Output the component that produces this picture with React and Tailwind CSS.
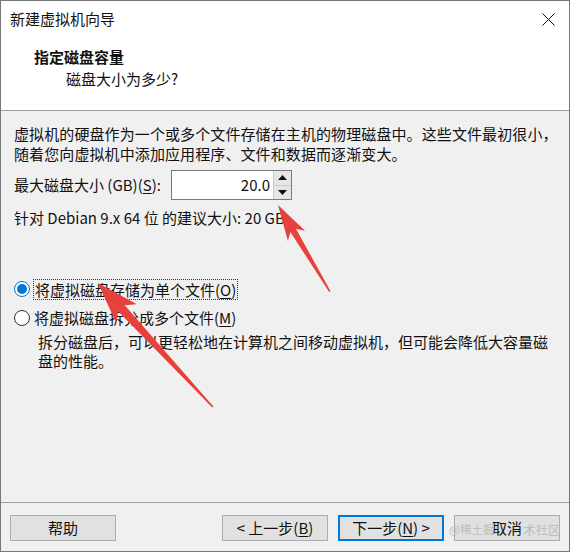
import React from 'react';

const font = { fontFamily: '"Noto Sans CJK SC", "Noto Sans", sans-serif' };

function U({ children }) {
    return <span className="underline underline-offset-2">{children}</span>;
}

function Radio({ checked }) {
    return checked ? (
        <span className="w-[16px] h-[16px] rounded-full border border-[#0078d7] bg-white flex items-center justify-center shrink-0">
            <span className="w-[10px] h-[10px] rounded-full bg-[#0078d7]" />
        </span>
    ) : (
        <span className="w-[16px] h-[16px] rounded-full border border-[#333] bg-white shrink-0" />
    );
}

function Btn({ children, primary, className = '' }) {
    return (
        <button
            className={`w-[106px] h-[26px] bg-[#e1e1e1] text-[15px] text-[#111] flex items-center justify-center ${
                primary ? 'border-2 border-[#0078d7]' : 'border border-[#adadad]'
            } ${className}`}
        >
            {children}
        </button>
    );
}

function Arrow({ x, y, angle, len, head, width }) {
    const hw = width / 2;
    return (
        <g transform={`translate(${x} ${y}) rotate(${angle})`}>
            <polygon
                points={`0,0 ${head},${-hw} ${head * 0.82},${-hw * 0.32} ${len},-0.8 ${len},0.8 ${head * 0.82},${hw * 0.32} ${head},${hw}`}
                fill="#e8413b"
            />
        </g>
    );
}

export default function App() {
    return (
        <div className="relative w-[570px] h-[552px] overflow-hidden border border-[#777] bg-[#f0f0f0] text-[#111] flex flex-col" style={font}>
            {/* header */}
            <div className="bg-white h-[110px] border-b border-[#a0a0a0] flex flex-col shrink-0">
                <div className="h-[36px] flex items-center justify-between pl-[9px] pr-[14px] text-[15px]">
                    <span>新建虚拟机向导</span>
                    <svg width="13" height="13" viewBox="0 0 13 13" className="mt-[1px]">
                        <path d="M0.5 0.5 L12.5 12.5 M12.5 0.5 L0.5 12.5" stroke="#111" strokeWidth="1" />
                    </svg>
                </div>
                <div className="pl-[33px] mt-[9px] text-[15px] font-bold leading-[22px]">指定磁盘容量</div>
                <div className="pl-[65px] text-[15px] leading-[22px]">磁盘大小为多少?</div>
            </div>

            {/* body */}
            <div className="flex-1 flex flex-col pl-[13px] pt-[13px] text-[15px]">
                <p className="leading-[20px] tracking-[0.1px]">
                    虚拟机的硬盘作为一个或多个文件存储在主机的物理磁盘中。这些文件最初很小，
                    <br />
                    随着您向虚拟机中添加应用程序、文件和数据而逐渐变大。
                </p>
                <div className="flex items-center mt-[6px] h-[30px]">
                    <span className="w-[157px]">
                        最大磁盘大小 (GB)(<U>S</U>):
                    </span>
                    <div className="flex h-[30px] w-[121px] border border-[#7a7a7a] bg-white">
                        <div className="flex-1 text-right pr-[3px] leading-[27px]">20.0</div>
                        <div className="w-[18px] flex flex-col border-l border-[#ccc]">
                            <div className="flex-1 bg-[#e6e6e6] border-b border-[#ccc] flex items-center justify-center">
                                <svg width="9" height="5" viewBox="0 0 9 5"><path d="M4.5 0 L9 5 L0 5 Z" fill="#111" /></svg>
                            </div>
                            <div className="flex-1 bg-[#e6e6e6] flex items-center justify-center">
                                <svg width="9" height="5" viewBox="0 0 9 5"><path d="M0 0 L9 0 L4.5 5 Z" fill="#111" /></svg>
                            </div>
                        </div>
                    </div>
                </div>
                <div className="mt-[8px] leading-[20px]">针对 Debian 9.x 64 位 的建议大小: 20 GB</div>

                <div className="mt-[50px] flex items-center h-[22px]">
                    <Radio checked />
                    <span className="ml-[3px] px-[1px] border border-dotted border-[#333] leading-[19px]">
                        将虚拟磁盘存储为单个文件(<U>O</U>)
                    </span>
                </div>
                <div className="mt-[7px] flex items-center h-[22px]">
                    <Radio />
                    <span className="ml-[4px] leading-[20px]">
                        将虚拟磁盘拆分成多个文件(<U>M</U>)
                    </span>
                </div>
                <p className="pl-[24px] mt-[3px] leading-[19px]">
                    拆分磁盘后，可以更轻松地在计算机之间移动虚拟机，但可能会降低大容量磁
                    <br />
                    盘的性能。
                </p>
            </div>

            {/* footer */}
            <div className="h-[49px] border-t border-[#a0a0a0] flex items-start pt-[12px] px-[9px] shrink-0">
                <Btn>帮助</Btn>
                <div className="flex-1" />
                <Btn className="mr-[10px]">
                    &lt; 上一步(<U>B</U>)
                </Btn>
                <Btn primary className="mr-[10px]">
                    下一步(<U>N</U>) &gt;
                </Btn>
                <Btn>取消</Btn>
            </div>

            {/* watermark, split around the cancel label */}
            <div className="absolute left-[448px] top-[520px] text-[11.5px] text-[#bcbcbc] pointer-events-none whitespace-nowrap">
                @稀土掘
            </div>
            <div className="absolute left-[522px] top-[520px] text-[12.5px] text-[#bcbcbc] pointer-events-none whitespace-nowrap">
                术社区
            </div>

            {/* annotation arrows */}
            <svg className="absolute left-0 top-0 pointer-events-none" width="570" height="552">
                <Arrow x={277} y={204} angle={59.1} len={101} head={36} width={20} />
                <Arrow x={97} y={282} angle={47.2} len={169} head={42} width={28} />
            </svg>
        </div>
    );
}
